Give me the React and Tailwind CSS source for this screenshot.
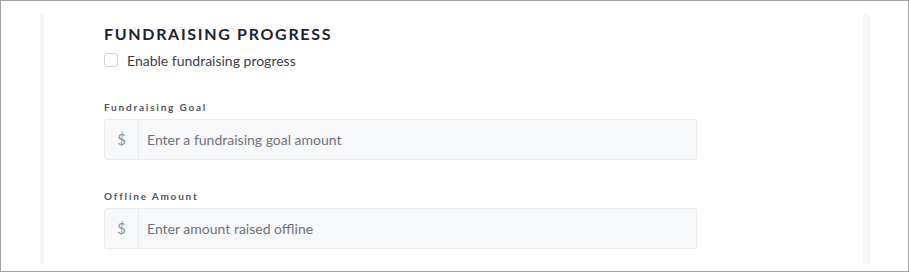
import React from 'react';

function MoneyField({ label, placeholder }) {
  return (
    <div>
      <label className="block text-[10px] leading-[14px] font-bold tracking-[0.18em] text-[#4f5561]">{label}</label>
      <div className="mt-[5px] flex h-[41px] w-[593px]">
        <span className="flex w-[35px] items-center justify-center rounded-l-[3px] border border-[#e9ebef] bg-[#f7f8fa] text-[15px] text-[#9097a6]">
          $
        </span>
        <input
          type="text"
          placeholder={placeholder}
          className="flex-1 rounded-r-[3px] border border-l-0 border-[#e9ebef] bg-[#f7f8fa] px-[8px] text-[14px] text-[#333] placeholder-[#707379] outline-none"
        />
      </div>
    </div>
  );
}

export default function App() {
  return (
    <div className="h-[272px] w-[909px] border border-[#a3a3a3] bg-white pt-[13px] pl-[39px]" style={{ fontFamily: 'Lato, "Open Sans", sans-serif' }}>
      <div className="h-[250px] w-[830px] border-l-4 border-r-[7px] border-[#f6f7f9] pl-[60px] pt-[8px]">
        <h2 className="text-[16px] leading-[24px] font-bold tracking-[0.105em] text-[#1e2230]">FUNDRAISING PROGRESS</h2>
        <label className="mt-[4px] flex h-[20px] items-center gap-[9px] text-[14px] text-[#3c404b]">
          <span className="h-[14px] w-[14px] rounded-[3px] border border-[#cfd3da] bg-white" />
          Enable fundraising progress
        </label>
        <div className="mt-[30px]">
          <MoneyField label="Fundraising Goal" placeholder="Enter a fundraising goal amount" />
        </div>
        <div className="mt-[29px]">
          <MoneyField label="Offline Amount" placeholder="Enter amount raised offline" />
        </div>
      </div>
    </div>
  );
}
